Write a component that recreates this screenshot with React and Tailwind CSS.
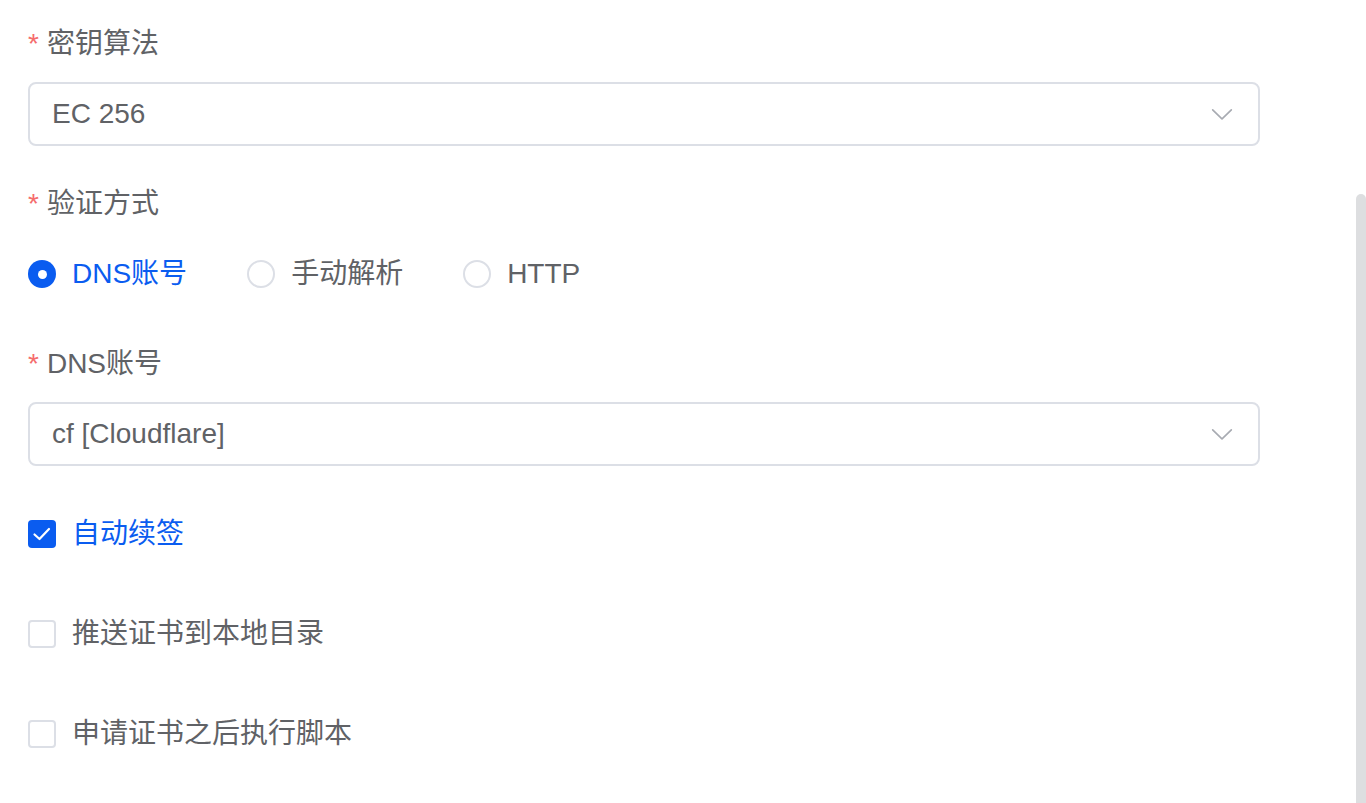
import React, { useState } from "react";

const FONT = { fontFamily: '"Liberation Sans", "Noto Sans CJK SC", sans-serif' };

const Label = ({ children }) => (
  <div className="mb-[16px] flex h-[44px] items-center text-[28px] leading-[44px] text-[#606266]">
    <span className="mr-[8px] text-[#f56c6c]">*</span>
    {children}
  </div>
);

const Select = ({ value }) => (
  <div className="flex h-[64px] w-[1232px] items-center justify-between rounded-[8px] border-2 border-[#dcdfe6] bg-white pl-[22px] pr-[22px]">
    <span className="text-[28px] text-[#606266]">{value}</span>
    <svg viewBox="0 0 1024 1024" className="h-[28px] w-[28px] text-[#a8abb2]">
      <path
        fill="currentColor"
        d="M831.872 340.864 512 652.672 192.128 340.864a30.592 30.592 0 0 0-42.752 0 29.12 29.12 0 0 0 0 41.6L489.664 714.24a32 32 0 0 0 44.672 0l340.288-331.712a29.12 29.12 0 0 0 0-41.728 30.592 30.592 0 0 0-42.752 0z"
      />
    </svg>
  </div>
);

const Radio = ({ label, checked, onClick }) => (
  <label onClick={onClick} className="mr-[60px] flex cursor-pointer items-center">
    {checked ? (
      <span className="flex h-[28px] w-[28px] items-center justify-center rounded-full bg-[#0a5cf0]">
        <span className="h-[9px] w-[9px] rounded-full bg-white" />
      </span>
    ) : (
      <span className="h-[28px] w-[28px] rounded-full border-2 border-[#dcdfe6] bg-white" />
    )}
    <span className={`pl-[16px] text-[28px] ${checked ? "text-[#0a5cf0]" : "text-[#606266]"}`}>{label}</span>
  </label>
);

const Check = ({ label, checked, onClick }) => (
  <label onClick={onClick} className="flex h-[64px] cursor-pointer items-center">
    {checked ? (
      <span className="flex h-[28px] w-[28px] items-center justify-center rounded-[4px] bg-[#0a5cf0]">
        <svg viewBox="0 0 20 20" className="h-[20px] w-[20px]">
          <path d="M2.5 10.5 7.5 15 17 5" fill="none" stroke="white" strokeWidth="2.2" strokeLinecap="round" strokeLinejoin="round" />
        </svg>
      </span>
    ) : (
      <span className="h-[28px] w-[28px] rounded-[4px] border-2 border-[#dcdfe6] bg-white" />
    )}
    <span className={`pl-[16px] text-[28px] ${checked ? "text-[#0a5cf0]" : "text-[#606266]"}`}>{label}</span>
  </label>
);

export default function App() {
  const [mode, setMode] = useState("dns");
  const [checks, setChecks] = useState({ renew: true, push: false, script: false });
  const toggle = (k) => setChecks({ ...checks, [k]: !checks[k] });

  return (
    <div className="relative h-[803px] w-[1366px] overflow-hidden bg-white" style={FONT}>
      <div className="pl-[28px] pt-[22px]">
        {/* 密钥算法 */}
        <div className="mb-[36px]">
          <Label>密钥算法</Label>
          <Select value="EC 256" />
        </div>

        {/* 验证方式 */}
        <div className="mb-[36px]">
          <Label>验证方式</Label>
          <div className="flex h-[64px] items-center">
            <Radio label="DNS账号" checked={mode === "dns"} onClick={() => setMode("dns")} />
            <Radio label="手动解析" checked={mode === "manual"} onClick={() => setMode("manual")} />
            <Radio label="HTTP" checked={mode === "http"} onClick={() => setMode("http")} />
          </div>
        </div>

        {/* DNS账号 */}
        <div className="mb-[36px]">
          <Label>DNS账号</Label>
          <Select value="cf [Cloudflare]" />
        </div>

        <div className="mb-[36px]">
          <Check label="自动续签" checked={checks.renew} onClick={() => toggle("renew")} />
        </div>
        <div className="mb-[36px]">
          <Check label="推送证书到本地目录" checked={checks.push} onClick={() => toggle("push")} />
        </div>
        <div className="mb-[36px]">
          <Check label="申请证书之后执行脚本" checked={checks.script} onClick={() => toggle("script")} />
        </div>
      </div>

      {/* scrollbar thumb */}
      <div className="absolute right-0 top-[194px] h-[640px] w-[10px] rounded-t-[6px] bg-[#dddee0]" />
    </div>
  );
}
